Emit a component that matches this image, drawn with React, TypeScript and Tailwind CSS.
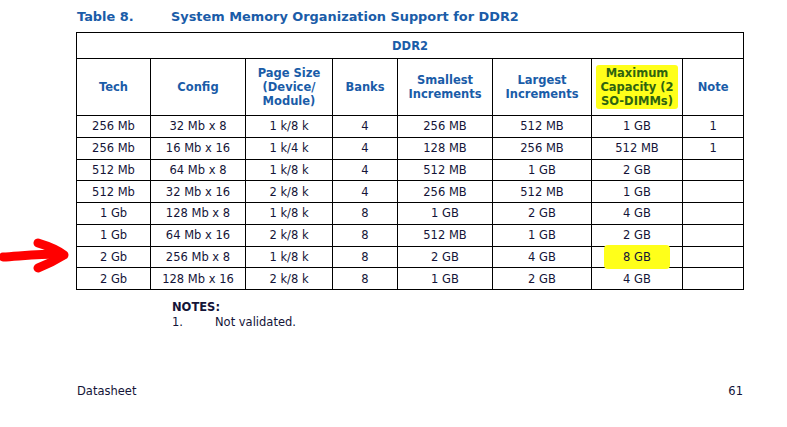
import React from 'react';

// DDR2 memory organization table, datasheet page 61
const rows: string[][] = [
  ['256 Mb', '32 Mb x 8', '1 k/8 k', '4', '256 MB', '512 MB', '1 GB', '1'],
  ['256 Mb', '16 Mb x 16', '1 k/4 k', '4', '128 MB', '256 MB', '512 MB', '1'],
  ['512 Mb', '64 Mb x 8', '1 k/8 k', '4', '512 MB', '1 GB', '2 GB', ''],
  ['512 Mb', '32 Mb x 16', '2 k/8 k', '4', '256 MB', '512 MB', '1 GB', ''],
  ['1 Gb', '128 Mb x 8', '1 k/8 k', '8', '1 GB', '2 GB', '4 GB', ''],
  ['1 Gb', '64 Mb x 16', '2 k/8 k', '8', '512 MB', '1 GB', '2 GB', ''],
  ['2 Gb', '256 Mb x 8', '1 k/8 k', '8', '2 GB', '4 GB', '8 GB', ''],
  ['2 Gb', '128 Mb x 16', '2 k/8 k', '8', '1 GB', '2 GB', '4 GB', ''],
];

const colWidths = ['w-[74px]', 'w-[95px]', 'w-[87px]', 'w-[65px]', 'w-[95px]', 'w-[99px]', 'w-[91px]', 'w-[61px]'];

// hand-drawn marker arrow pointing at the 2 Gb row
function RedArrow() {
  return (
    <svg className="absolute left-0 top-[234px]" width="72" height="42" viewBox="0 0 72 42">
      <path d="M3 23 C 20 22, 40 20, 58 20" stroke="#ff0000" strokeWidth="9" strokeLinecap="round" fill="none" />
      <path d="M38 9 C 48 12, 58 16, 64 21 C 56 26, 46 31, 38 34" stroke="#ff0000" strokeWidth="9" strokeLinecap="round" strokeLinejoin="round" fill="none" />
    </svg>
  );
}

export default function App() {
  return (
    <div className="relative w-[787px] h-[427px] bg-white overflow-hidden" style={{ fontFamily: '"DejaVu Sans", Verdana, sans-serif' }}>
      <RedArrow />
      <div className="pl-[77px] pt-[9px]">
        {/* Title */}
        <div className="flex text-[12.9px] leading-[16px] font-bold text-[#1a5ca8]">
          <span className="w-[94px]">Table 8.</span>
          <span>System Memory Organization Support for DDR2</span>
        </div>

        <table className="mt-[7px] -ml-px border-collapse table-fixed w-[667px] text-center">
          <colgroup>
            {colWidths.map((w, i) => (
              <col key={i} className={w} />
            ))}
          </colgroup>
          <thead>
            <tr className="h-[26px]">
              <th colSpan={8} className="border border-black text-[11.5px] font-bold text-[#1a5ca8] leading-[14px]">
                DDR2
              </th>
            </tr>
            <tr className="h-[57px] text-[11.5px] font-bold text-[#1a5ca8] leading-[14px]">
              <th className="border border-black">Tech</th>
              <th className="border border-black">Config</th>
              <th className="border border-black">
                Page Size
                <br />
                (Device/
                <br />
                Module)
              </th>
              <th className="border border-black">Banks</th>
              <th className="border border-black">
                Smallest
                <br />
                Increments
              </th>
              <th className="border border-black">
                Largest
                <br />
                Increments
              </th>
              <th className="border border-black px-[4px]">
                <span className="inline-block w-full bg-[#ffff1a] text-[#2f6410] rounded-[3px] py-[1px]">
                  Maximum
                  <br />
                  Capacity (2
                  <br />
                  SO-DIMMs)
                </span>
              </th>
              <th className="border border-black">Note</th>
            </tr>
          </thead>
          <tbody className="text-[11.5px] text-[#141438] leading-[14px]">
            {rows.map((r, ri) => (
              <tr key={ri} className="h-[21.75px]">
                {r.map((c, ci) => {
                  const marked = ri === 6 && ci === 6;
                  return (
                    <td key={ci} className="border border-black relative">
                      {marked && (
                        <span className="absolute left-[12px] right-[12px] -top-[2px] -bottom-[2px] bg-[#ffff1a] rounded-[4px]" />
                      )}
                      <span className="relative">{c}</span>
                    </td>
                  );
                })}
              </tr>
            ))}
          </tbody>
        </table>

        {/* Notes */}
        <div className="mt-[10px] pl-[95px] text-[11.5px] leading-[15px] text-[#141438]">
          <div className="font-bold">NOTES:</div>
          <div className="flex">
            <span className="w-[43px]">1.</span>
            <span>Not validated.</span>
          </div>
        </div>

        {/* Footer */}
        <div className="mt-[54px] flex justify-between w-[666px] text-[11.5px] leading-[15px] text-[#141438]">
          <span>Datasheet</span>
          <span>61</span>
        </div>
      </div>
    </div>
  );
}
